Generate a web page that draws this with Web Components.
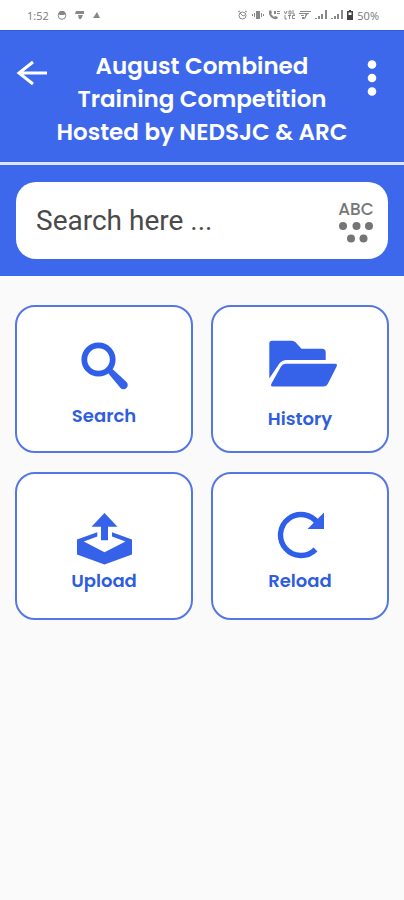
<!DOCTYPE html>
<html lang="en">
<head>
<meta charset="utf-8">
<meta name="viewport" content="width=device-width, initial-scale=1">
<title>August Combined Training Competition</title>
<style>
    body {
        margin: 0;
        background: #fafafa;
        font-family: Poppins, Inter, sans-serif;
    }
</style>
</head>
<body>
<competition-app></competition-app>

<script>
class phone_status_bar extends HTMLElement {
    constructor() {
        super();
        this.attachShadow({ mode: 'open' });
    }

    connectedCallback() {
        this.shadowRoot.innerHTML = `
        <style>
        :host {
            display: flex;
            justify-content: space-between;
            align-items: center;
            height: 30px;
            padding: 0 25px 0 27px;
            background: white;
            color: #777;
            font-family: "Open Sans", sans-serif;
            font-size: 11px;
        }
        div {
            display: flex;
            align-items: center;
            gap: 4px;
        }
        .left {
            gap: 8px;
        }
        svg {
            display: block;
            fill: #888;
        }
        .line {
            fill: none;
            stroke: #888;
        }
        </style>
        <div class="left">
            <span>1:52</span>
            <svg width="10" height="10" viewBox="0 0 10 10"><circle class="line" cx="5" cy="5.5" r="3.8"/><path d="M1 4L3 1h4l2 3-2 1H3z"/></svg>
            <svg width="10" height="10" viewBox="0 0 10 10"><path d="M1 1h8v3H0zM3 5h5L6 9H4z"/></svg>
            <svg width="8" height="10" viewBox="0 0 8 10"><path d="M4 2l3 6H0z"/></svg>
        </div>
        <div>
            <svg width="11" height="10" viewBox="0 0 11 10"><g class="line"><circle cx="5.5" cy="5.5" r="3.5"/><path d="M1 2l2-1M10 2L8 1M3 3l3 3 2-1"/></g></svg>
            <svg width="12" height="10" viewBox="0 0 12 10"><path d="M4 1h4v8H4zM2 3h1v4H2zM9 3h1v4H9zM0 4h1v2H0zM11 4h1v2h-1z"/></svg>
            <svg width="12" height="10" viewBox="0 0 12 10"><path d="M1 1l2-1 1 3-1 1 3 3 1-1 3 1-1 2C5 10 0 6 1 1zM6 1h2v3H6zM9 1h3v1H9zM9 3h3v1H9z"/></svg>
            <svg width="11" height="10" viewBox="0 0 11 10"><path class="line" d="M0 1l1.500 3L3 1M5 1h2v3H5zM9 0v4h2M1 5v4h2M4 5.500h3M5.500 5v4M11 5.500H8.500v3H11"/></svg>
            <svg width="12" height="10" viewBox="0 0 12 10"><path d="M1 1h11v1H1zM0 3h10v1H0zM2 5h3v1H2zM3 7h2v2H3zM7 3h2L6 9H5z"/></svg>
            <svg width="12" height="10" viewBox="0 0 12 10"><path d="M0 8h2v1H0zM3 6h2v3H3zM6 4h2v5H6zM10 0h2v9h-2z"/></svg>
            <svg width="12" height="10" viewBox="0 0 12 10"><path d="M0 8h2v1H0zM3 6h2v3H3zM6 4h2v5H6zM10 0h2v9h-2z"/></svg>
            <svg width="6" height="10" viewBox="0 0 6 10"><path fill="#444" d="M2 0h2v1h2v9H0V1h2zM1.500 2.500V5h3V2.500z" fill-rule="evenodd"/></svg>
            <span>50%</span>
        </div>`;
    }
}

class app_header extends HTMLElement {
    constructor() {
        super();
        this.attachShadow({ mode: 'open' });
    }

    connectedCallback() {
        this.shadowRoot.innerHTML = `
        <style>
        :host {
            display: grid;
            grid-template-columns: 32px 1fr 32px;
            align-items: start;
            padding: 19px 16px 13px;
            background: #3e68ec;
            border-top: 1px solid #2f5cd8;
            border-bottom: 3px solid #dbe5ff;
            color: white;
        }
        h1 {
            margin: 0;
            font-size: 23px;
            line-height: 33px;
            font-weight: 600;
            text-align: center;
            white-space: nowrap;
            justify-self: center;
        }
        button {
            display: flex;
            justify-content: center;
            padding: 0;
            border: none;
            background: none;
            cursor: pointer;
        }
        svg {
            display: block;
            fill: white;
        }
        .back {
            fill: none;
            stroke: white;
            stroke-width: 3;
        }
        </style>
        <button aria-label="Back">
            <svg class="back" width="32" height="46" viewBox="0 0 32 46"><path d="M31 23H3M17 12L3 23l14 11"/></svg>
        </button>
        <h1><slot></slot></h1>
        <button aria-label="More options">
            <svg width="32" height="56" viewBox="0 0 32 56"><circle cx="16" cy="14.500" r="4.300"/><circle cx="16" cy="28" r="4.300"/><circle cx="16" cy="41.500" r="4.300"/></svg>
        </button>`;
    }
}

class search_field extends HTMLElement {
    constructor() {
        super();
        this.attachShadow({ mode: 'open' });
    }

    connectedCallback() {
        this.shadowRoot.innerHTML = `
        <style>
        :host {
            display: block;
            padding: 17px 16px;
            background: #3e68ec;
        }
        .box {
            display: flex;
            align-items: center;
            height: 77px;
            padding: 0 13px 0 20px;
            border-radius: 20px;
            background: white;
        }
        input {
            flex: 1;
            min-width: 0;
            padding: 0;
            border: none;
            outline: none;
            background: none;
            color: #444;
            font-family: Roboto, sans-serif;
            font-size: 28px;
            line-height: 36px;
        }
        input::placeholder {
            color: #4a4a4a;
            opacity: 1;
        }
        button {
            display: flex;
            flex-direction: column;
            align-items: center;
            padding: 0;
            border: none;
            background: none;
            color: #777;
            font-family: inherit;
            font-size: 17px;
            font-weight: 500;
            line-height: 20px;
            cursor: pointer;
        }
        svg {
            display: block;
            fill: #757575;
        }
        </style>
        <div class="box">
            <input type="text" aria-label="Search" placeholder="${this.getAttribute('placeholder')}">
            <button>
                <span>ABC</span>
                <svg width="38" height="24" viewBox="0 0 38 24"><circle cx="6" cy="7" r="4"/><circle cx="19.500" cy="7" r="4"/><circle cx="32" cy="7" r="4"/><circle cx="14" cy="19.500" r="4"/><circle cx="26.500" cy="19.500" r="4"/></svg>
            </button>
        </div>`;
    }
}

class action_card extends HTMLElement {
    constructor() {
        super();
        this.attachShadow({ mode: 'open' });
    }

    connectedCallback() {
        this.shadowRoot.innerHTML = `
        <style>
        :host {
            display: block;
        }
        button {
            display: flex;
            flex-direction: column;
            align-items: center;
            justify-content: center;
            gap: 4px;
            box-sizing: border-box;
            width: 100%;
            min-height: 148px;
            padding: 12px 0 0;
            border: 2px solid #5577e2;
            border-radius: 20px;
            background: white;
            color: #2f5de0;
            font-family: inherit;
            font-size: 18px;
            font-weight: 600;
            line-height: 24px;
            cursor: pointer;
        }
        </style>
        <button>
            <slot name="icon"></slot>
            <span><slot></slot></span>
        </button>`;
    }
}

class competition_app extends HTMLElement {
    constructor() {
        super();
        this.attachShadow({ mode: 'open' });
    }

    connectedCallback() {
        this.shadowRoot.innerHTML = `
        <style>
        :host {
            display: block;
        }
        main {
            display: grid;
            grid-template-columns: 1fr 1fr;
            gap: 19px 18px;
            padding: 29px 15px;
        }
        svg {
            display: block;
            fill: #3562e8;
        }
        .line {
            fill: none;
            stroke: #2f5fe8;
        }
        </style>
        <phone-status-bar></phone-status-bar>
        <app-header>August Combined<br>Training Competition<br>Hosted by NEDSJC &amp; ARC</app-header>
        <search-field placeholder="Search here ..."></search-field>
        <main>
            <action-card>
                <svg slot="icon" width="64" height="58" viewBox="0 0 64 58">
                    <circle class="line" cx="26.500" cy="17.500" r="14.200" stroke-width="5.800"/>
                    <path d="M36 31l4.500-4L54.500 40a4 4 0 0 1-6 6z"/>
                </svg>
                Search
            </action-card>
            <action-card>
                <svg slot="icon" width="74" height="63" viewBox="0 0 74 63">
                    <path d="M9 .7h20q2 0 3.500 1.500L38.500 8.700H59q3.700 0 3.700 3.500v7.800H24q-5 0-8 4L6.300 38.500V3.500Q6.300.7 9 .7z"/>
                    <path d="M22.500 23.700H72q3 0 1.500 3L65 43.500q-1.500 3-4.500 3H10q-3 0-1.500-3l9.500-17q1.500-2.800 4.500-2.800z"/>
                </svg>
                History
            </action-card>
            <action-card>
                <svg slot="icon" width="64" height="53" viewBox="0 0 64 53">
                    <path d="M32.500 1l13 13.700H36v13.600h-7V14.700h-9.500z"/>
                    <path d="M25.300 20.300v4.200l-13.500 5 20.700 10.800 21-10.800-13.500-5v-4.200L60 27.500v15L32.500 52.500 5 42.500v-15z"/>
                </svg>
                Upload
            </action-card>
            <action-card>
                <svg slot="icon" width="64" height="54" viewBox="0 0 64 54">
                    <path class="line" d="M50 12.500A20.500 20.500 0 1 0 47.500 38.500" stroke-width="5.400"/>
                    <path d="M56 1.500V18H39.500z"/>
                </svg>
                Reload
            </action-card>
        </main>`;
    }
}

customElements.define("phone-status-bar", phone_status_bar)
customElements.define("app-header", app_header)
customElements.define("search-field", search_field)
customElements.define("action-card", action_card)
customElements.define("competition-app", competition_app)
</script>
</body>
</html>
